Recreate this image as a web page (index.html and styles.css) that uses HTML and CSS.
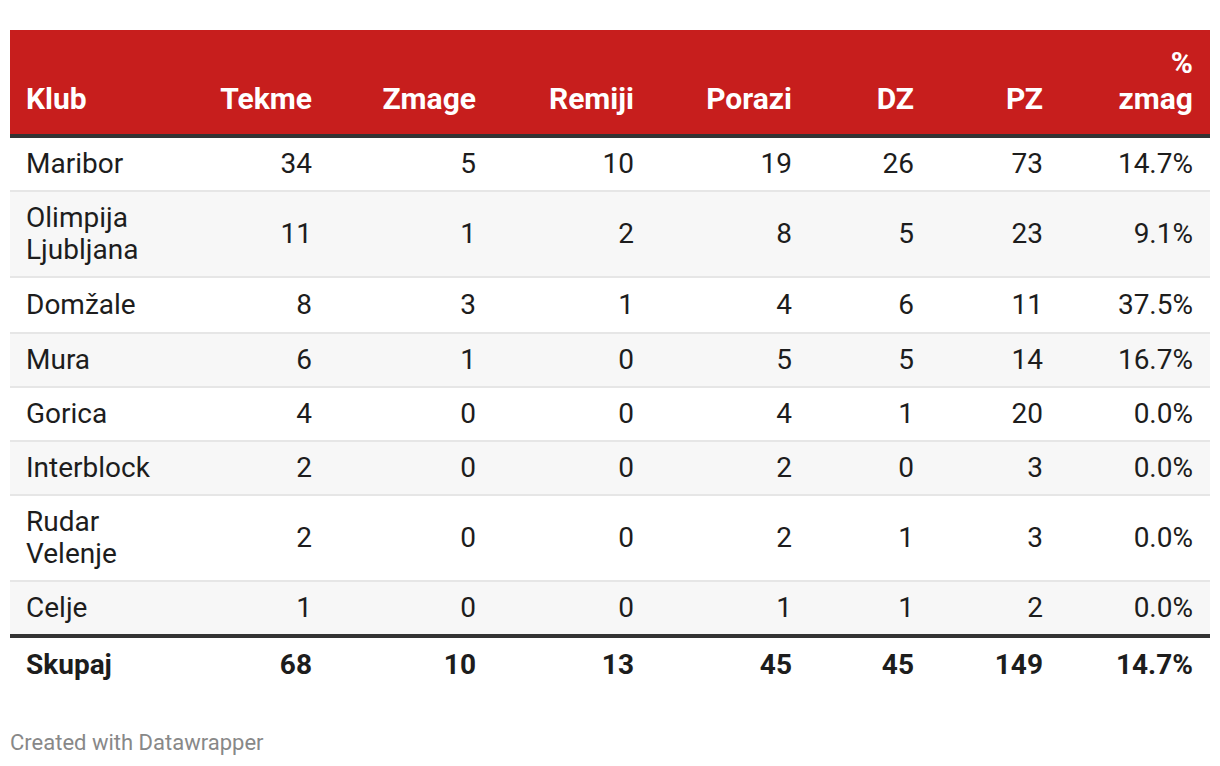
FILE: index.html
```html
<!DOCTYPE html>
<html>
<head>
<meta charset="utf-8">
<link rel="stylesheet" href="styles.css">
</head>
<body>
<div class="chart">
  <table class="tbl">
    <colgroup>
      <col class="c-klub"><col class="c-tekme"><col class="c-zmage"><col class="c-remiji"><col class="c-porazi"><col class="c-dz"><col class="c-pz"><col class="c-pct">
    </colgroup>
    <thead>
      <tr>
        <th class="left">Klub</th>
        <th>Tekme</th>
        <th>Zmage</th>
        <th>Remiji</th>
        <th>Porazi</th>
        <th>DZ</th>
        <th>PZ</th>
        <th>%<br>zmag</th>
      </tr>
    </thead>
    <tbody>
      <tr><td class="left">Maribor</td><td>34</td><td>5</td><td>10</td><td>19</td><td>26</td><td>73</td><td>14.7%</td></tr>
      <tr><td class="left">Olimpija<br>Ljubljana</td><td>11</td><td>1</td><td>2</td><td>8</td><td>5</td><td>23</td><td>9.1%</td></tr>
      <tr class="tall"><td class="left">Domžale</td><td>8</td><td>3</td><td>1</td><td>4</td><td>6</td><td>11</td><td>37.5%</td></tr>
      <tr><td class="left">Mura</td><td>6</td><td>1</td><td>0</td><td>5</td><td>5</td><td>14</td><td>16.7%</td></tr>
      <tr><td class="left">Gorica</td><td>4</td><td>0</td><td>0</td><td>4</td><td>1</td><td>20</td><td>0.0%</td></tr>
      <tr><td class="left">Interblock</td><td>2</td><td>0</td><td>0</td><td>2</td><td>0</td><td>3</td><td>0.0%</td></tr>
      <tr><td class="left">Rudar<br>Velenje</td><td>2</td><td>0</td><td>0</td><td>2</td><td>1</td><td>3</td><td>0.0%</td></tr>
      <tr class="last"><td class="left">Celje</td><td>1</td><td>0</td><td>0</td><td>1</td><td>1</td><td>2</td><td>0.0%</td></tr>
    </tbody>
    <tfoot>
      <tr><td class="left">Skupaj</td><td>68</td><td>10</td><td>13</td><td>45</td><td>45</td><td>149</td><td>14.7%</td></tr>
    </tfoot>
  </table>
  <div class="credit">Created with Datawrapper</div>
</div>
</body>
</html>
```
FILE: styles.css
```css
html, body {
  margin: 0;
  padding: 0;
  background: #ffffff;
}
body {
  font-family: Roboto, "Liberation Sans", sans-serif;
  color: #1d1d1d;
}
.chart {
  padding: 30px 10px 0 10px;
}
.tbl {
  width: 1200px;
  border-collapse: collapse;
  table-layout: fixed;
  font-size: 28px;
  line-height: 32px;
}
.c-klub { width: 170px; }
.c-tekme { width: 149px; }
.c-zmage { width: 164px; }
.c-remiji { width: 158px; }
.c-porazi { width: 158px; }
.c-dz { width: 122px; }
.c-pz { width: 129px; }
.c-pct { width: 150px; }
.tbl th, .tbl td {
  text-align: right;
  padding: 10px 17px 10px 17px;
  vertical-align: middle;
}
.tbl .left {
  text-align: left;
  padding-left: 16px;
}
.tbl thead th {
  background: #c71e1d;
  color: #ffffff;
  font-weight: 700;
  font-size: 30px;
  line-height: 36px;
  vertical-align: bottom;
  padding-top: 15px;
  padding-bottom: 17px;
  border-bottom: 4px solid #333333;
}
.tbl tbody td {
  border-bottom: 2px solid #e6e6e6;
}
.tbl tbody tr.tall td {
  padding-top: 11px;
  padding-bottom: 11px;
}
.tbl tbody tr:nth-child(even) td {
  background: #f7f7f7;
}
.tbl tbody tr.last td {
  border-bottom: 4px solid #333333;
}
.tbl tfoot td {
  font-weight: 700;
  padding-top: 11px;
  padding-bottom: 10px;
}
.credit {
  margin-top: 39px;
  font-size: 22px;
  color: #888888;
}
```
